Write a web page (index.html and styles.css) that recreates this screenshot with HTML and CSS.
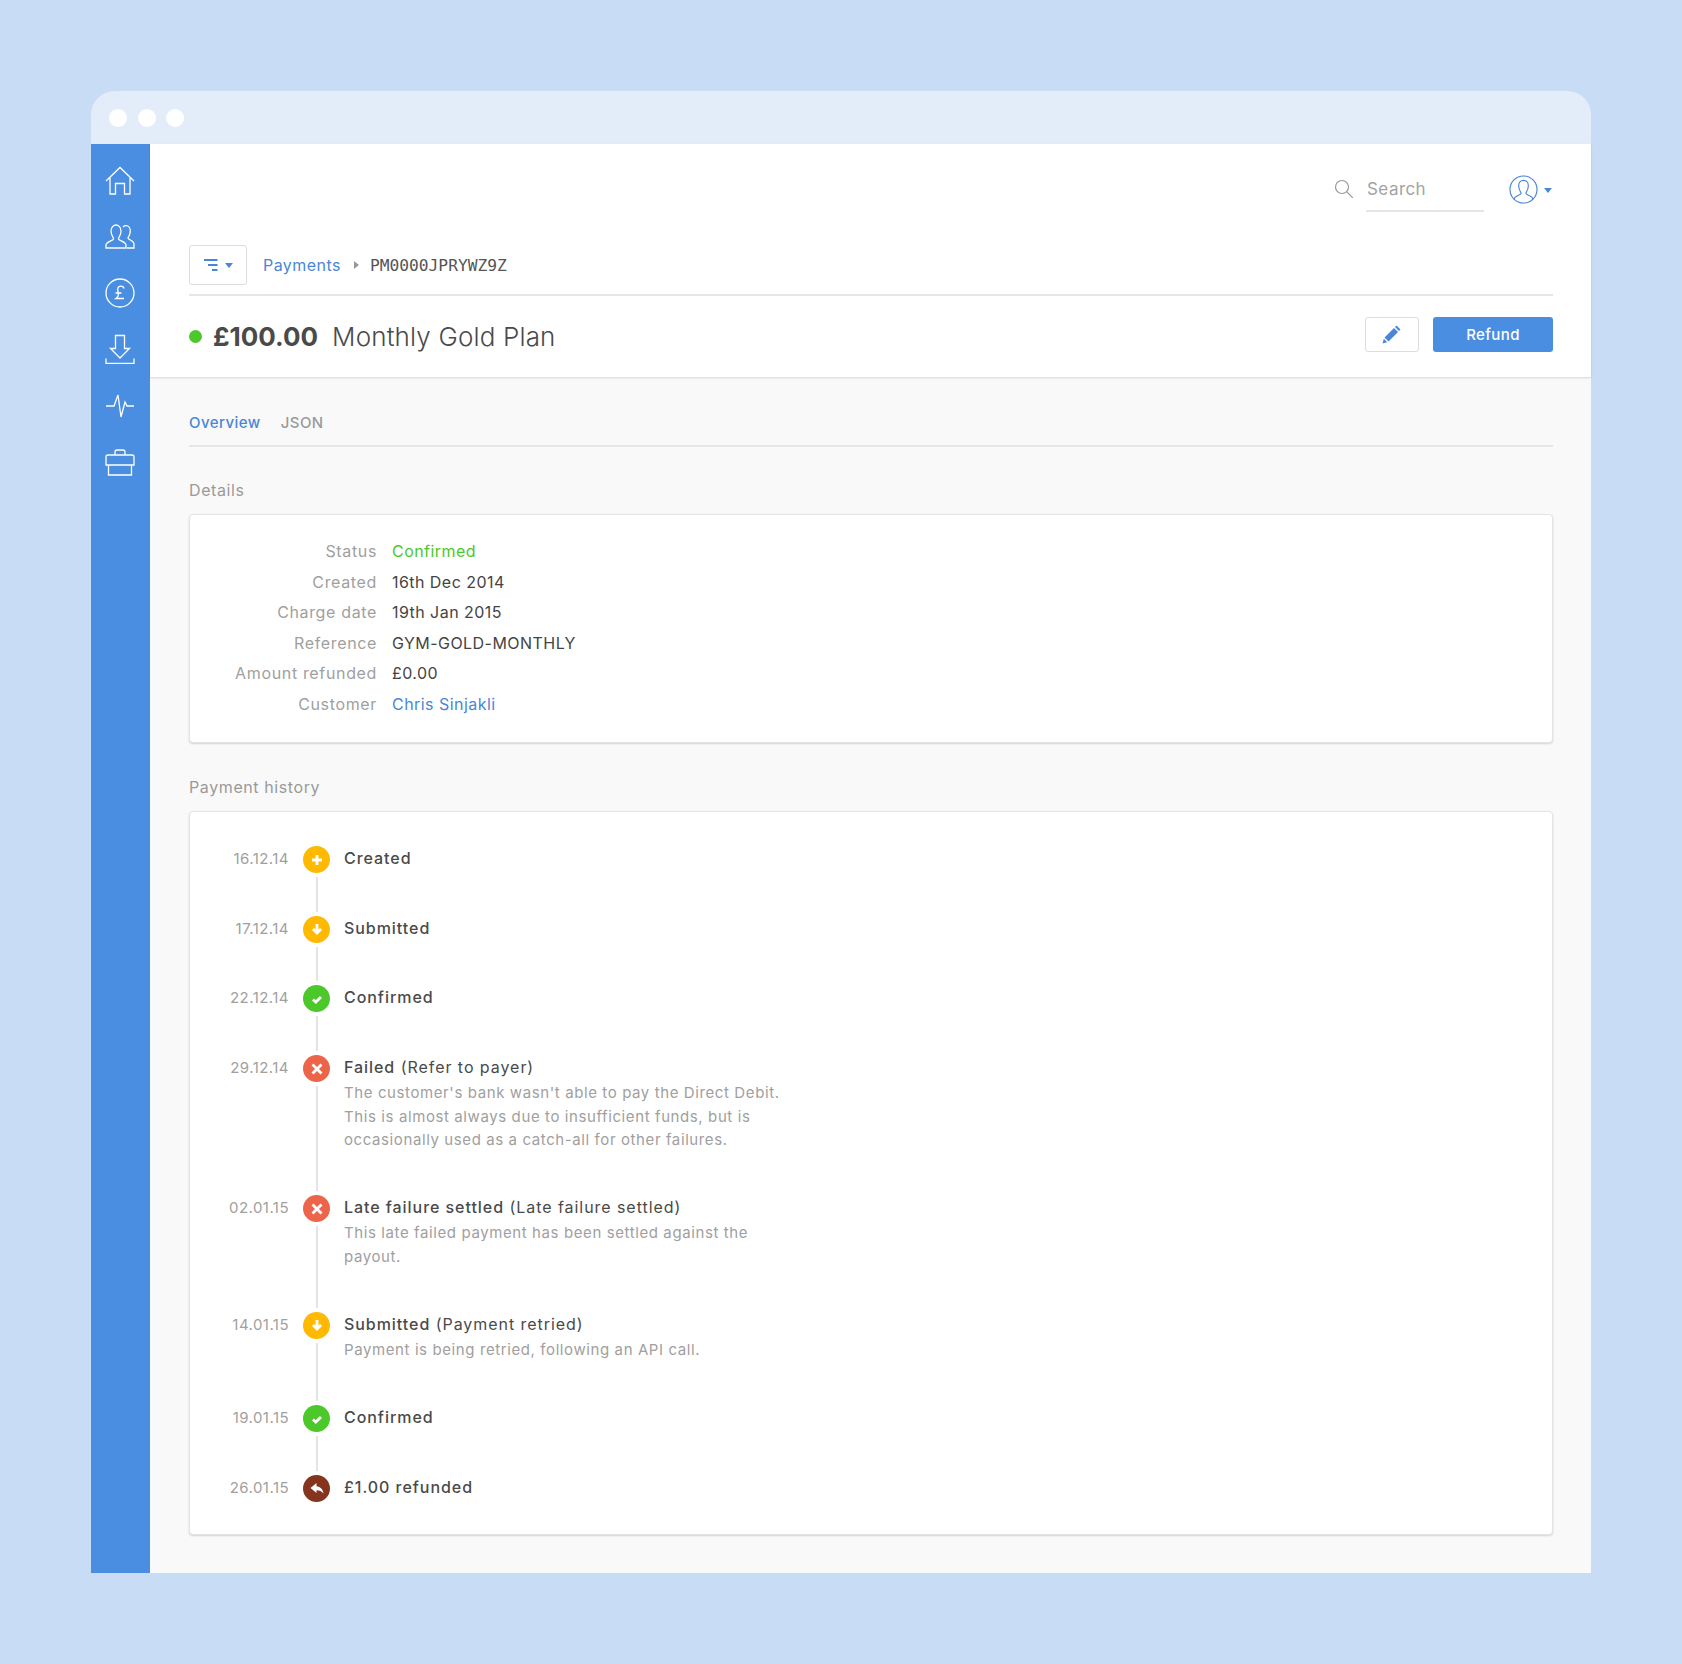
FILE: index.html
```html
<!DOCTYPE html>
<html lang="en">
<head>
    <meta charset="UTF-8">
    <title>Payment PM0000JPRYWZ9Z</title>
    <link rel="stylesheet" href="styles.css">
</head>
<body>
    <div class="window">
        <div class="titlebar">
            <span class="light"></span>
            <span class="light"></span>
            <span class="light"></span>
        </div>
        <div class="app">
            <nav class="sidebar">
                <svg class="nav-icon" viewBox="0 0 30 30"><path d="M1 15 15 1.500 29 15M5 11.500V28h5.500V17.500h9V28H25V11.500"/></svg>
                <svg class="nav-icon" viewBox="0 0 30 30"><path d="M1 26v-3c0-3 6.500-4 7.500-6 .5-1.200-2.500-3-2.500-8 0-3.500 2.500-6 5-6s5 2.500 5 6c0 5-3 6.800-2.500 8 1 2 7.500 3 7.500 6v3zM18 5c.8-.8 1.800-1.300 3-1.300 2.400 0 4.300 2.300 4.300 5.300 0 4.500-2.600 6-2.200 7.200.6 1.700 5.900 2.600 5.900 5.800v4h-7"/></svg>
                <svg class="nav-icon" viewBox="0 0 30 30"><circle cx="15" cy="15" r="14"/><path d="M19 10.500c-.4-1.500-1.600-2.300-3-2.300-2 0-3.300 1.400-3.300 3.300 0 2 .8 3 .8 4.500 0 2-.8 3.500-2.500 4.500h8M10.500 15h6"/></svg>
                <svg class="nav-icon" viewBox="0 0 30 30"><path d="M10.500 1.500h9v13h5L15 24l-9.500-9.500h5zM1 24.500V29.500h28v-5"/></svg>
                <svg class="nav-icon" viewBox="0 0 30 30"><path d="M1 16h8l4-11 3 22 4-15 2 4h7"/></svg>
                <svg class="nav-icon" viewBox="0 0 30 30"><path d="M10 9V6c0-1 1-2 2-2h6c1 0 2 1 2 2v3M1 11c0-1.200.8-2 2-2h24c1.200 0 2 .8 2 2v8H1zM3.500 19v10h23V19"/></svg>
            </nav>
            <div class="main">
                <header class="header">
                    <div class="topbar">
                        <svg class="search-icon" viewBox="0 0 20 20"><circle cx="8" cy="8" r="6.500"/><path d="m12.800 12.800 6 6"/></svg>
                        <span class="search">Search</span>
                        <svg class="avatar" viewBox="0 0 30 30"><circle cx="15" cy="15" r="14"/><path d="M5.500 25.500v-1.500c1-2.500 6.500-3 7-5 .3-1.200-2.500-3-2.500-8 0-3.500 2.300-5.500 5-5.500s5 2 5 5.500c0 5-2.800 6.800-2.500 8 .5 2 6 2.500 7 5v1.500"/></svg>
                        <span class="caret"></span>
                    </div>
                    <div class="crumbs">
                        <button class="menu-btn">
                            <svg class="menu-icon" viewBox="0 0 14 12"><path d="M0 1h13.500M4 6h9.500M8 11h5.500"/></svg>
                            <span class="caret"></span>
                        </button>
                        <a class="link crumb-link">Payments</a>
                        <span class="crumb-arrow"></span>
                        <span class="crumb-id">PM0000JPRYWZ9Z</span>
                    </div>
                    <div class="title-row">
                        <span class="status-dot"></span>
                        <span class="amount">£100.00</span>
                        <span class="plan">Monthly Gold Plan</span>
                        <button class="edit-btn">
                            <svg class="edit-icon" viewBox="0 0 20 20"><path d="M14.500 1.500 18.500 5.500 17 7 13 3zM12 4l4 4-9.500 9.500-4-4zM1.800 14.800l3.400 3.400L.500 19.500z"/></svg>
                        </button>
                        <button class="refund-btn">Refund</button>
                    </div>
                </header>
                <div class="content">
                    <div class="tabs">
                        <a class="tab tab-active">Overview</a>
                        <a class="tab">JSON</a>
                    </div>
                    <h2 class="section-title">Details</h2>
                    <div class="card details">
                        <div class="detail-label">Status</div><div class="detail-value confirmed">Confirmed</div>
                        <div class="detail-label">Created</div><div class="detail-value">16th Dec 2014</div>
                        <div class="detail-label">Charge date</div><div class="detail-value">19th Jan 2015</div>
                        <div class="detail-label">Reference</div><div class="detail-value">GYM-GOLD-MONTHLY</div>
                        <div class="detail-label">Amount refunded</div><div class="detail-value">£0.00</div>
                        <div class="detail-label">Customer</div><div class="detail-value link">Chris Sinjakli</div>
                    </div>
                    <h2 class="section-title history-title">Payment history</h2>
                    <div class="card history">
                        <div class="event">
                            <div class="event-date">16.12.14</div>
                            <div class="event-marker">
                                <span class="badge yellow"><svg viewBox="0 0 14 14"><path d="M7 2v10M2 7h10"/></svg></span>
                                <span class="event-line"></span>
                            </div>
                            <div class="event-body"><div class="event-title"><b>Created</b></div></div>
                        </div>
                        <div class="event">
                            <div class="event-date">17.12.14</div>
                            <div class="event-marker">
                                <span class="badge yellow"><svg viewBox="0 0 14 14"><path d="M7 2v9M3 7l4 4 4-4"/></svg></span>
                                <span class="event-line"></span>
                            </div>
                            <div class="event-body"><div class="event-title"><b>Submitted</b></div></div>
                        </div>
                        <div class="event">
                            <div class="event-date">22.12.14</div>
                            <div class="event-marker">
                                <span class="badge green"><svg viewBox="0 0 14 14"><path d="M3 7.500l2.800 2.500 5.200-5"/></svg></span>
                                <span class="event-line"></span>
                            </div>
                            <div class="event-body"><div class="event-title"><b>Confirmed</b></div></div>
                        </div>
                        <div class="event">
                            <div class="event-date">29.12.14</div>
                            <div class="event-marker">
                                <span class="badge red"><svg viewBox="0 0 14 14"><path d="M2.500 2.500l9 9M11.500 2.500l-9 9"/></svg></span>
                                <span class="event-line"></span>
                            </div>
                            <div class="event-body">
                                <div class="event-title"><b>Failed</b> (Refer to payer)</div>
                                <p class="event-text">The customer's bank wasn't able to pay the Direct Debit.<br>This is almost always due to insufficient funds, but is<br>occasionally used as a catch-all for other failures.</p>
                            </div>
                        </div>
                        <div class="event">
                            <div class="event-date">02.01.15</div>
                            <div class="event-marker">
                                <span class="badge red"><svg viewBox="0 0 14 14"><path d="M2.500 2.500l9 9M11.500 2.500l-9 9"/></svg></span>
                                <span class="event-line"></span>
                            </div>
                            <div class="event-body">
                                <div class="event-title"><b>Late failure settled</b> (Late failure settled)</div>
                                <p class="event-text">This late failed payment has been settled against the<br>payout.</p>
                            </div>
                        </div>
                        <div class="event">
                            <div class="event-date">14.01.15</div>
                            <div class="event-marker">
                                <span class="badge yellow"><svg viewBox="0 0 14 14"><path d="M7 2v9M3 7l4 4 4-4"/></svg></span>
                                <span class="event-line"></span>
                            </div>
                            <div class="event-body">
                                <div class="event-title"><b>Submitted</b> (Payment retried)</div>
                                <p class="event-text">Payment is being retried, following an API call.</p>
                            </div>
                        </div>
                        <div class="event">
                            <div class="event-date">19.01.15</div>
                            <div class="event-marker">
                                <span class="badge green"><svg viewBox="0 0 14 14"><path d="M3 7.500l2.800 2.500 5.200-5"/></svg></span>
                                <span class="event-line"></span>
                            </div>
                            <div class="event-body"><div class="event-title"><b>Confirmed</b></div></div>
                        </div>
                        <div class="event event-last">
                            <div class="event-date">26.01.15</div>
                            <div class="event-marker">
                                <span class="badge brown"><svg viewBox="0 0 14 14"><path class="solid" d="M6.500 2 .5 7l6 5V9.200c3 0 5 .8 7 3.300C13 8.500 10.500 5.700 6.500 5.300z"/></svg></span>
                            </div>
                            <div class="event-body"><div class="event-title"><b>£1.00 refunded</b></div></div>
                        </div>
                    </div>
                </div>
            </div>
        </div>
    </div>
</body>
</html>
```

FILE: styles.css
```css
* {
    box-sizing: border-box;
}
body {
    margin: 0;
    padding: 91px;
    background: #c8ddf5;
    font-family: Inter, "Liberation Sans", sans-serif;
    font-size: 16px;
    letter-spacing: 0.45px;
    color: #444;
}
.window {
    width: 1500px;
    height: 1482px;
    display: flex;
    flex-direction: column;
}
.titlebar {
    height: 53px;
    flex: none;
    display: flex;
    align-items: center;
    gap: 10.5px;
    padding-left: 18px;
    background: #e3edfa;
    border-radius: 24px 24px 0 0;
}
.light {
    width: 18px;
    height: 18px;
    border-radius: 50%;
    background: #fff;
}
.app {
    flex: 1;
    display: flex;
    min-height: 0;
}
.sidebar {
    width: 59px;
    flex: none;
    display: flex;
    flex-direction: column;
    align-items: center;
    gap: 26px;
    padding: 22px 2px 0 0;
    background: #4a8ee2;
}
.nav-icon {
    width: 30px;
    height: 30px;
    fill: none;
    stroke: #fff;
    stroke-width: 1.300;
}
.main {
    flex: 1;
    display: flex;
    flex-direction: column;
    background: #f9f9f9;
}
.header {
    height: 233px;
    flex: none;
    padding: 0 38px 0 39px;
    background: #fff;
    box-shadow: 0 1px 2px rgba(0, 0, 0, 0.15);
}
.topbar {
    height: 101px;
    display: flex;
    align-items: flex-start;
    justify-content: flex-end;
    padding: 31px 1px 0 0;
}
.search-icon {
    width: 20px;
    height: 20px;
    margin: 4px 12px 0 0;
    fill: none;
    stroke: #999;
    stroke-width: 1.200;
}
.search {
    width: 118px;
    height: 37px;
    padding-left: 1px;
    border-bottom: 2px solid #e6e6e6;
    color: #a3a3a3;
    line-height: 28px;
    font-size: 17px;
}
.avatar {
    width: 29px;
    height: 29px;
    margin-left: 25px;
    fill: none;
    stroke: #4a86d6;
    stroke-width: 1.200;
}
.caret {
    display: inline-block;
    width: 0;
    height: 0;
    border: 4px solid transparent;
    border-top: 5px solid #4a86d6;
    border-bottom: 0;
}
.topbar .caret {
    margin: 13px 0 0 6px;
}
.crumbs {
    height: 51px;
    padding-bottom: 9px;
    display: flex;
    align-items: center;
    border-bottom: 2px solid #e6e6e6;
}
.menu-btn {
    width: 58px;
    height: 40px;
    display: flex;
    align-items: center;
    justify-content: center;
    gap: 7px;
    padding: 0;
    background: #fff;
    border: 1px solid #ddd;
    border-radius: 3px;
    margin-right: 16px;
}
.menu-icon {
    width: 14px;
    height: 12px;
    fill: none;
    stroke: #4a86d6;
    stroke-width: 2.200;
}
.link {
    color: #4a86d6;
}
.crumb-arrow {
    width: 0;
    height: 0;
    margin: 0 11px 0 13px;
    border: 4.500px solid transparent;
    border-left: 5px solid #999;
    border-right: 0;
}
.crumb-id {
    font-family: "DejaVu Sans Mono", monospace;
    font-size: 16.250px;
    letter-spacing: 0;
    color: #555;
}
.title-row {
    height: 81px;
    display: flex;
    align-items: center;
}
.status-dot {
    width: 13px;
    height: 13px;
    border-radius: 50%;
    background: #4cc82b;
    margin-right: 11px;
}
.amount {
    font-size: 26px;
    font-weight: 700;
    letter-spacing: 0;
    color: #4a4a4a;
    margin-right: 14px;
}
.plan {
    font-size: 26px;
    font-weight: 300;
    letter-spacing: 0.15px;
    color: #4a4a4a;
    flex: 1;
}
.edit-btn {
    width: 54px;
    height: 35px;
    display: flex;
    align-items: center;
    justify-content: center;
    padding: 0;
    background: #fff;
    border: 1px solid #ddd;
    border-radius: 3px;
    margin: 0 14px 5px 0;
}
.edit-icon {
    width: 20px;
    height: 20px;
    fill: #4a86d6;
}
.refund-btn {
    width: 120px;
    height: 35px;
    margin-bottom: 5px;
    border: 0;
    border-radius: 3px;
    background: #4a8ee2;
    color: #fff;
    font: 500 15px Inter, sans-serif;
    letter-spacing: 0.4px;
}
.content {
    padding: 0 38px 0 39px;
}
.tabs {
    height: 70px;
    display: flex;
    align-items: flex-end;
    gap: 20px;
    padding-bottom: 13px;
    border-bottom: 2px solid #e6e6e6;
}
.tab {
    font-size: 15px;
    font-weight: 500;
    color: #999;
}
.tab-active {
    color: #4a86d6;
}
.section-title {
    margin: 31px 0 12px;
    height: 24px;
    line-height: 24px;
    font-size: 16px;
    font-weight: 400;
    letter-spacing: 0.6px;
    color: #999;
}
.history-title {
    margin-top: 32px;
}
.card {
    background: #fff;
    border: 1px solid #e4e4e4;
    border-radius: 4px;
    box-shadow: 0 1px 2px rgba(0, 0, 0, 0.15);
}
.details {
    height: 229px;
    display: grid;
    grid-template-columns: 187px 1fr;
    grid-auto-rows: 30.500px;
    column-gap: 15px;
    align-content: start;
    padding-top: 21px;
    line-height: 30.500px;
}
.detail-label {
    text-align: right;
    letter-spacing: 0.65px;
    color: #a0a0a0;
}
.detail-value {
    letter-spacing: 0.45px;
    color: #444;
}
.detail-value.confirmed {
    color: #4cc82b;
}
.detail-value.link {
    color: #4a86d6;
}
.history {
    height: 724px;
    padding-top: 34px;
}
.event {
    display: flex;
}
.event-date {
    width: 99px;
    flex: none;
    text-align: right;
    color: #a0a0a0;
    font-size: 15px;
    line-height: 26px;
}
.event-marker {
    width: 27px;
    flex: none;
    margin: 0 14px;
    display: flex;
    flex-direction: column;
    align-items: center;
}
.event-line {
    flex: 1;
    width: 2px;
    margin: 4px 0;
    background: #e4e4e4;
}
.badge {
    width: 27px;
    height: 27px;
    flex: none;
    border-radius: 50%;
    display: flex;
    align-items: center;
    justify-content: center;
}
.badge svg {
    width: 14px;
    height: 14px;
    fill: none;
    stroke: #fff;
    stroke-width: 2.800;
}
.badge svg .solid {
    fill: #fff;
    stroke: none;
}
.yellow {
    background: #ffb900;
}
.green {
    background: #4cc82b;
}
.red {
    background: #ec6449;
}
.brown {
    background: #85351d;
}
.event-body {
    padding-bottom: 45.700px;
}
.event-last .event-body {
    padding-bottom: 0;
}
.event-title {
    line-height: 24px;
    letter-spacing: 0.95px;
    color: #4a4a4a;
}
.event-title b {
    font-weight: 500;
}
.event-text {
    margin: 2px 0 -2px;
    font-size: 15px;
    line-height: 23.500px;
    letter-spacing: 0.6px;
    color: #a0a0a0;
}
```
